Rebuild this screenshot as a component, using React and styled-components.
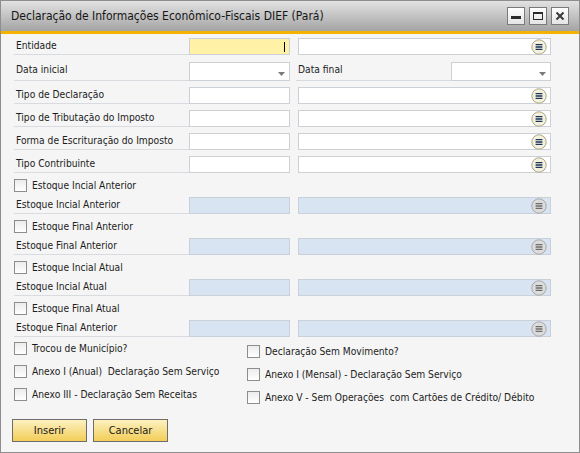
import React from 'react'
import styled, { createGlobalStyle } from 'styled-components'

const GlobalStyle = createGlobalStyle`
  * { box-sizing: border-box; }
  html, body { margin: 0; padding: 0; background: #ffffff; }
  body {
    font-family: "DejaVu Sans Condensed", "Liberation Sans", sans-serif;
    font-stretch: condensed;
    font-size: 10.2px;
    color: #1c1c1c;
  }
`

const Window = styled.div`
  width: 580px;
  height: 453px;
  border: 1px solid #8e8e8e;
  background: #f5f5f5;
  display: flex;
  flex-direction: column;
`

const TitleBar = styled.div`
  flex: 0 0 33px;
  background: linear-gradient(#e2e2e2, #a4a4a4);
  border-bottom: 3px solid #f3b300;
  display: flex;
  align-items: center;
  justify-content: space-between;
  padding: 0 10px 0 10px;
`

const Title = styled.div`
  font-size: 12px;
  color: #161616;
`

const WinButtons = styled.div`
  display: flex;
  gap: 4px;
`

const WinButton = styled.div`
  width: 18px;
  height: 18px;
  border: 1px solid #7a7a7a;
  background: linear-gradient(#ffffff, #e4e4e4);
  display: flex;
  align-items: center;
  justify-content: center;
`

const Body = styled.div`
  flex: 1;
  padding: 4px 27px 0 13px;
  display: flex;
  flex-direction: column;
`

const Row = styled.div`
  display: flex;
  height: ${(p) => p.h || 17}px;
  margin-top: ${(p) => p.mt || 0}px;
`

const Label = styled.div`
  flex: 0 0 ${(p) => p.w || 175}px;
  margin-left: ${(p) => p.ml || 0}px;
  padding: 1px 0 0 2px;
  line-height: 13px;
  border-bottom: 1px solid #d8dbdf;
  white-space: nowrap;
`

const Field = styled.div`
  position: relative;
  flex: 0 0 ${(p) => p.w || 101}px;
  margin-left: ${(p) => p.ml || 0}px;
  border: 1px solid ${(p) => (p.disabled ? '#c9d0da' : '#cdd1d6')};
  background: ${(p) => (p.focus ? '#fff2a6' : p.disabled ? '#d9e4f2' : '#ffffff')};
`

const Cursor = styled.div`
  position: absolute;
  right: 4px;
  top: 3px;
  width: 1px;
  height: 10px;
  background: #000;
`

const IconSlot = styled.div`
  position: absolute;
  right: 3px;
  top: 50%;
  transform: translateY(-50%);
  width: 16px;
  height: 16px;
  display: flex;
`

const ArrowSlot = styled.div`
  position: absolute;
  right: 4px;
  top: 9px;
  display: flex;
`

const CheckRow = styled.div`
  display: flex;
  align-items: center;
  gap: 5px;
  height: 16px;
  margin-top: ${(p) => p.mt || 0}px;
  white-space: pre;
`

const Box = styled.div`
  flex: 0 0 13px;
  width: 13px;
  height: 13px;
  border: 1px solid #8d8d8d;
  background: linear-gradient(#ececec, #ffffff);
`

const Columns = styled.div`
  display: flex;
  margin-top: 3px;
`

const Column = styled.div`
  display: flex;
  flex-direction: column;
  gap: 7px;
  width: ${(p) => p.w}px;
  padding-top: ${(p) => p.pt || 0}px;
`

const Actions = styled.div`
  display: flex;
  gap: 6px;
  margin: 14px 0 0 -2px;
`

const Button = styled.button`
  width: 75px;
  height: 23px;
  padding: 0;
  border: 1px solid #6d6d6d;
  background: linear-gradient(#fdf1c0, #f2cd58);
  font: inherit;
  font-size: 11px;
  color: #1a1a1a;
`

const ListIcon = ({ disabled }) => (
  <svg width="16" height="16" viewBox="0 0 16 16">
    <circle
      cx="8"
      cy="8"
      r="7.2"
      fill={disabled ? '#dcdcdc' : '#f3f0dc'}
      stroke={disabled ? '#a8a8a8' : '#aca68c'}
    />
    <path
      d="M4.6 5.7h6.8M4.6 8h6.8M4.6 10.3h6.8"
      stroke={disabled ? '#6c6c6c' : '#1d355c'}
      strokeWidth="1.3"
    />
  </svg>
)

const Arrow = () => (
  <svg width="7" height="4" viewBox="0 0 7 4">
    <path d="M0 0h7L3.5 4z" fill="#7a7a7a" />
  </svg>
)

const LinkField = ({ disabled }) => (
  <Field w={253} ml={8} disabled={disabled}>
    <IconSlot>
      <ListIcon disabled={disabled} />
    </IconSlot>
  </Field>
)

const FormRow = ({ label, mt, focus, disabled }) => (
  <Row mt={mt}>
    <Label>{label}</Label>
    <Field focus={focus} disabled={disabled}>
      {focus && <Cursor />}
    </Field>
    <LinkField disabled={disabled} />
  </Row>
)

const Check = ({ label, mt }) => (
  <CheckRow mt={mt}>
    <Box />
    <span>{label}</span>
  </CheckRow>
)

const estoque = [
  ['Estoque Incial Anterior', 'Estoque Incial Anterior'],
  ['Estoque Final Anterior', 'Estoque Final Anterior'],
  ['Estoque Incial Atual', 'Estoque Incial Atual'],
  ['Estoque Final Atual', 'Estoque Final Anterior'],
]

export default function App() {
  return (
    <>
      <GlobalStyle />
      <Window>
        <TitleBar>
          <Title>Declaração de Informações Econômico-Fiscais DIEF (Pará)</Title>
          <WinButtons>
            <WinButton>
              <svg width="12" height="12" viewBox="0 0 12 12">
                <rect x="1" y="6" width="10" height="3" fill="#2a2a2a" />
              </svg>
            </WinButton>
            <WinButton>
              <svg width="12" height="12" viewBox="0 0 12 12">
                <rect x="1.5" y="2.5" width="9" height="7" fill="none" stroke="#2a2a2a" />
                <rect x="1" y="2" width="10" height="2" fill="#2a2a2a" />
              </svg>
            </WinButton>
            <WinButton>
              <svg width="12" height="12" viewBox="0 0 12 12">
                <path d="M2.5 2.5l7 7M9.5 2.5l-7 7" stroke="#3a3a3a" strokeWidth="2" />
              </svg>
            </WinButton>
          </WinButtons>
        </TitleBar>
        <Body>
          <FormRow label="Entidade" focus />
          <Row h={19} mt={7}>
            <Label>Data inicial</Label>
            <Field>
              <ArrowSlot>
                <Arrow />
              </ArrowSlot>
            </Field>
            <Label w={155} ml={6}>Data final</Label>
            <Field w={100}>
              <ArrowSlot>
                <Arrow />
              </ArrowSlot>
            </Field>
          </Row>
          <FormRow label="Tipo de Declaração" mt={6} />
          <FormRow label="Tipo de Tributação do Imposto" mt={6} />
          <FormRow label="Forma de Escrituração do Imposto" mt={6} />
          <FormRow label="Tipo Contribuinte" mt={6} />
          {estoque.map(([check, label]) => (
            <React.Fragment key={check + label}>
              <Check label={check} mt={4} />
              <FormRow label={label} mt={4} disabled />
            </React.Fragment>
          ))}
          <Columns>
            <Column w={233}>
              <Check label="Trocou de Município?" />
              <Check label="Anexo I (Anual)  Declaração Sem Serviço" />
              <Check label="Anexo III - Declaração Sem Receitas" />
            </Column>
            <Column w={300} pt={3}>
              <Check label="Declaração Sem Movimento?" />
              <Check label="Anexo I (Mensal) - Declaração Sem Serviço" />
              <Check label="Anexo V - Sem Operações  com Cartões de Crédito/ Débito" />
            </Column>
          </Columns>
          <Actions>
            <Button>Inserir</Button>
            <Button>Cancelar</Button>
          </Actions>
        </Body>
      </Window>
    </>
  )
}
